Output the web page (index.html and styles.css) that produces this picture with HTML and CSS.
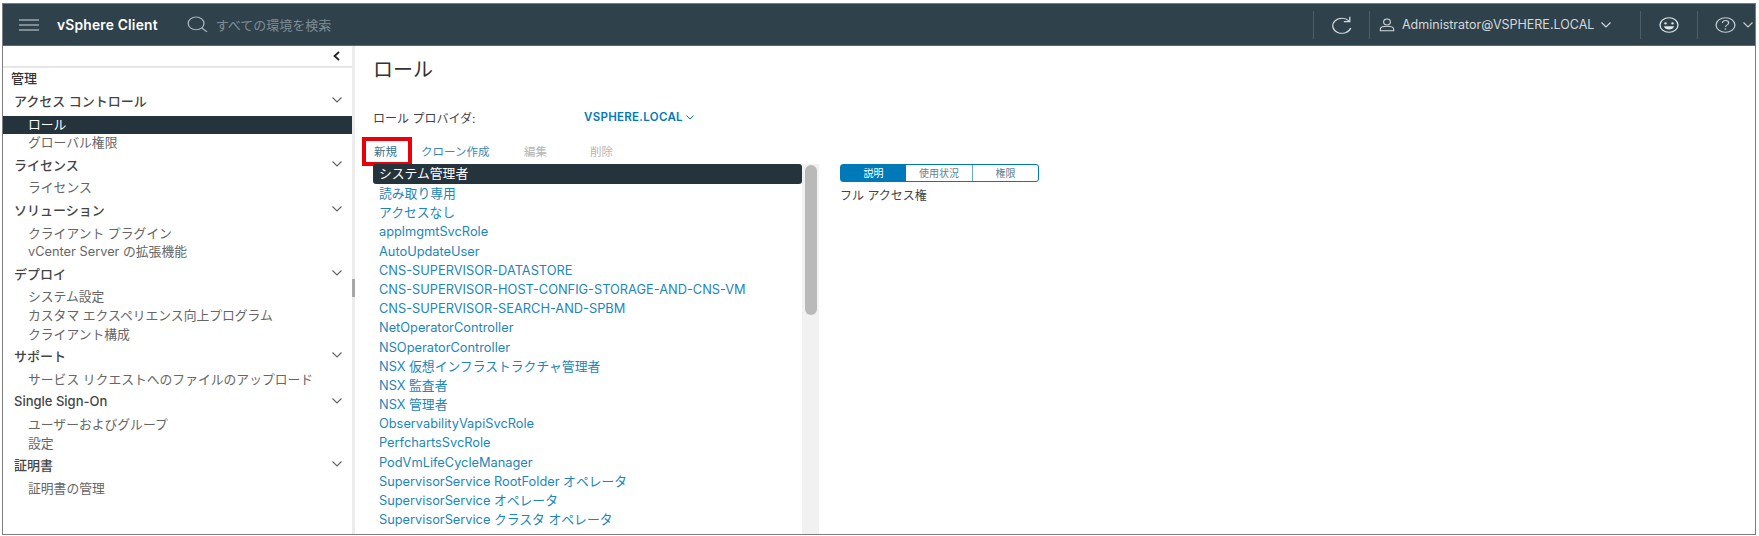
FILE: index.html
```html
<!DOCTYPE html>
<html lang="ja">

<head>
    <meta charset="UTF-8">
    <title>vSphere Client</title>
    <link rel="stylesheet" href="styles.css">
</head>

<body>
    <div class="frame">
        <header class="topbar">
            <svg class="menu-icon" width="20" height="12" viewBox="0 0 20 12">
                <path d="M0 1h20M0 6h20M0 11h20" stroke="#9aa5ab" stroke-width="1.4" fill="none" />
            </svg>
            <span class="brand">vSphere Client</span>
            <svg class="search-icon" width="21" height="17" viewBox="0 0 22 22" preserveAspectRatio="none">
                <circle cx="9.5" cy="9.5" r="8.3" stroke="#a9b3b8" stroke-width="1.4" fill="none" />
                <path d="M15.5 15.5l5.5 5" stroke="#a9b3b8" stroke-width="1.4" fill="none" />
            </svg>
            <span class="search-text">すべての環境を検索</span>
            <div class="top-actions">
                <div class="top-item refresh">
                    <svg width="22" height="18" viewBox="0 0 24 24" preserveAspectRatio="none">
                        <path d="M19.5 6.5A10 10 0 1 0 21.5 16" stroke="#d3d9dc" stroke-width="1.4" fill="none" />
                        <path d="M20.5 1v6.5H14" stroke="#d3d9dc" stroke-width="1.4" fill="none" />
                    </svg>
                </div>
                <div class="top-item user">
                    <svg width="16" height="14" viewBox="0 0 18 18" preserveAspectRatio="none">
                        <circle cx="9" cy="5" r="3.8" stroke="#d3d9dc" stroke-width="1.2" fill="none" />
                        <path d="M1.5 16.5V14c0-2 3-3.5 7.5-3.5s7.5 1.5 7.5 3.5v2.5z" stroke="#d3d9dc" stroke-width="1.2" fill="none" />
                    </svg>
                    <span class="user-name">Administrator@VSPHERE.LOCAL</span>
                    <svg width="10" height="6" viewBox="0 0 10 6">
                        <path d="M.5.5L5 5 9.5.5" stroke="#d3d9dc" stroke-width="1.2" fill="none" />
                    </svg>
                </div>
                <div class="top-item feedback">
                    <svg width="20" height="16" viewBox="0 0 20 20" preserveAspectRatio="none">
                        <circle cx="10" cy="10" r="9" stroke="#e2e6e8" stroke-width="1.3" fill="none" />
                        <circle cx="6.5" cy="8" r="1.3" fill="#e2e6e8" />
                        <circle cx="13.5" cy="8" r="1.3" fill="#e2e6e8" />
                        <path d="M5 11.5h10c-.5 3-2.5 4-5 4s-4.5-1-5-4z" fill="#e2e6e8" />
                    </svg>
                </div>
                <div class="top-item help">
                    <svg width="21" height="16" viewBox="0 0 20 20" preserveAspectRatio="none">
                        <circle cx="10" cy="10" r="9" stroke="#c4ccd0" stroke-width="1.2" fill="none" />
                        <path d="M7 7.5c0-4 6-4 6 0 0 2.5-3 2.5-3 5" stroke="#c4ccd0" stroke-width="1.2" fill="none" />
                        <circle cx="10" cy="15" r=".9" fill="#c4ccd0" />
                    </svg>
                    <svg width="10" height="6" viewBox="0 0 10 6">
                        <path d="M.5.5L5 5 9.5.5" stroke="#c4ccd0" stroke-width="1.2" fill="none" />
                    </svg>
                </div>
            </div>
        </header>

        <div class="content">
            <aside class="sidebar">
                <div class="collapse-bar">
                    <svg width="7" height="10" viewBox="0 0 7 10">
                        <path d="M6 1L1.5 5 6 9" stroke="#222" stroke-width="1.8" fill="none" />
                    </svg>
                </div>
                <div class="side-title">管理</div>

                <div class="group-head">アクセス コントロール<svg class="chev" width="10" height="6" viewBox="0 0 10 6"><path d="M.5.5L5 5 9.5.5" /></svg></div>
                <div class="side-item active">ロール</div>
                <div class="side-item">グローバル権限</div>

                <div class="group-head">ライセンス<svg class="chev" width="10" height="6" viewBox="0 0 10 6"><path d="M.5.5L5 5 9.5.5" /></svg></div>
                <div class="side-item">ライセンス</div>

                <div class="group-head">ソリューション<svg class="chev" width="10" height="6" viewBox="0 0 10 6"><path d="M.5.5L5 5 9.5.5" /></svg></div>
                <div class="side-item">クライアント プラグイン</div>
                <div class="side-item">vCenter Server の拡張機能</div>

                <div class="group-head">デプロイ<svg class="chev" width="10" height="6" viewBox="0 0 10 6"><path d="M.5.5L5 5 9.5.5" /></svg></div>
                <div class="side-item">システム設定</div>
                <div class="side-item">カスタマ エクスペリエンス向上プログラム</div>
                <div class="side-item">クライアント構成</div>

                <div class="group-head">サポート<svg class="chev" width="10" height="6" viewBox="0 0 10 6"><path d="M.5.5L5 5 9.5.5" /></svg></div>
                <div class="side-item">サービス リクエストへのファイルのアップロード</div>

                <div class="group-head">Single Sign-On<svg class="chev" width="10" height="6" viewBox="0 0 10 6"><path d="M.5.5L5 5 9.5.5" /></svg></div>
                <div class="side-item">ユーザーおよびグループ</div>
                <div class="side-item">設定</div>

                <div class="group-head">証明書<svg class="chev" width="10" height="6" viewBox="0 0 10 6"><path d="M.5.5L5 5 9.5.5" /></svg></div>
                <div class="side-item">証明書の管理</div>
            </aside>

            <div class="splitter">
                <div class="splitter-thumb"></div>
            </div>

            <main class="main">
                <h1>ロール</h1>
                <div class="provider">
                    <span class="provider-label">ロール プロバイダ:</span>
                    <span class="provider-value">VSPHERE.LOCAL</span>
                    <svg width="8" height="5" viewBox="0 0 8 5">
                        <path d="M.5.5L4 4 7.5.5" stroke="#0079b8" stroke-width="1" fill="none" />
                    </svg>
                </div>
                <div class="toolbar">
                    <span class="tool tool-new">新規</span>
                    <span class="tool tool-clone">クローン作成</span>
                    <span class="tool tool-edit off">編集</span>
                    <span class="tool off">削除</span>
                </div>
                <div class="panes">
                    <div class="role-pane">
                        <ul class="roles">
                            <li class="selected">システム管理者</li>
                            <li>読み取り専用</li>
                            <li>アクセスなし</li>
                            <li>applmgmtSvcRole</li>
                            <li>AutoUpdateUser</li>
                            <li>CNS-SUPERVISOR-DATASTORE</li>
                            <li>CNS-SUPERVISOR-HOST-CONFIG-STORAGE-AND-CNS-VM</li>
                            <li>CNS-SUPERVISOR-SEARCH-AND-SPBM</li>
                            <li>NetOperatorController</li>
                            <li>NSOperatorController</li>
                            <li>NSX 仮想インフラストラクチャ管理者</li>
                            <li>NSX 監査者</li>
                            <li>NSX 管理者</li>
                            <li>ObservabilityVapiSvcRole</li>
                            <li>PerfchartsSvcRole</li>
                            <li>PodVmLifeCycleManager</li>
                            <li>SupervisorService RootFolder オペレータ</li>
                            <li>SupervisorService オペレータ</li>
                            <li>SupervisorService クラスタ オペレータ</li>
                        </ul>
                        <div class="role-scroll">
                            <div class="role-thumb"></div>
                        </div>
                    </div>
                    <div class="detail">
                        <div class="tabs">
                            <span class="tab on">説明</span>
                            <span class="tab mid">使用状況</span>
                            <span class="tab last">権限</span>
                        </div>
                        <p class="detail-text">フル アクセス権</p>
                    </div>
                </div>
            </main>
        </div>
    </div>
</body>

</html>
```

FILE: styles.css
```css
* {
    margin: 0;
    padding: 0;
    box-sizing: border-box;
}

body {
    height: 536px;
    padding: 3px 3px 1px 2px;
    overflow: hidden;
    background: #fff;
    font-family: Inter, "Noto Sans CJK JP", sans-serif;
    font-size: 12px;
    color: #565656;
}

.frame {
    height: 100%;
    display: flex;
    flex-direction: column;
    border: 1px solid #7d7d7d;
}

/* top bar */
.topbar {
    height: 42px;
    flex: none;
    display: flex;
    align-items: center;
    background: #2f414b;
    border-bottom: 1px solid #5c6a72;
    color: #fff;
}

.menu-icon {
    margin-left: 16px;
}

.brand {
    margin-left: 18px;
    font-size: 13.8px;
    font-weight: 600;
    letter-spacing: 0.2px;
}

.search-icon {
    margin-left: 29px;
}

.search-text {
    margin-left: 8px;
    color: #7f8d94;
    font-size: 13px;
}

.top-actions {
    margin-left: auto;
    display: flex;
    align-items: center;
}

.top-item {
    height: 28px;
    display: flex;
    align-items: center;
    justify-content: center;
    border-left: 1px solid #4d5e67;
}

.refresh {
    width: 56px;
}

.user {
    width: 271px;
    gap: 7px;
    justify-content: flex-start;
    padding-left: 9px;
    color: #d3d9dc;
    font-size: 12.5px;
}

.feedback {
    width: 57px;
}

.help {
    width: 58px;
    gap: 7px;
    justify-content: flex-start;
    padding-left: 17px;
}

/* sidebar */
.content {
    flex: 1;
    display: flex;
    min-height: 0;
}

.sidebar {
    width: 349px;
    flex: none;
}

.collapse-bar {
    height: 22px;
    display: flex;
    align-items: center;
    justify-content: flex-end;
    padding-right: 12px;
    border-bottom: 2px solid #e6e6e6;
}

.side-title {
    height: 21px;
    line-height: 21px;
    padding-left: 8px;
    font-size: 13px;
    font-weight: 500;
    color: #333;
}

.group-head {
    height: 18.6px;
    margin: 2px 0 6px;
    display: flex;
    align-items: center;
    justify-content: space-between;
    padding: 0 10px 0 11px;
    font-size: 13px;
    font-weight: 500;
    color: #444;
}

.chev {
    stroke: #666;
    stroke-width: 1.2;
    fill: none;
}

.side-item {
    height: 18.6px;
    line-height: 18.6px;
    padding-left: 25px;
    font-size: 12.8px;
    color: #666;
}

.side-item.active {
    background: #25333d;
    color: #fff;
}

.splitter {
    width: 3px;
    flex: none;
    background: #ececec;
    padding-top: 233px;
}

.splitter-thumb {
    height: 18px;
    background: #a8a8a8;
}

/* main area */
.main {
    flex: 1;
    min-width: 0;
    padding-left: 7px;
    display: flex;
    flex-direction: column;
}

h1 {
    height: 47px;
    padding: 12px 0 0 11px;
    font-size: 20px;
    font-weight: 400;
    line-height: 24px;
    color: #333;
}

.provider {
    height: 48px;
    display: flex;
    align-items: center;
    padding-left: 11px;
    color: #444;
    font-size: 12px;
}

.provider-label {
    width: 211px;
}

.provider-value {
    margin-right: 3px;
    color: #0079b8;
    font-size: 11.5px;
    font-weight: 600;
    letter-spacing: 0.3px;
}

.toolbar {
    height: 25px;
    display: flex;
    align-items: center;
    margin-top: -2px;
    font-size: 11.5px;
    color: #0079b8;
}

.tool {
    height: 29px;
    line-height: 22px;
    border: 4px solid transparent;
}

.tool-new {
    width: 50px;
    padding-left: 8px;
    border-color: #e8000b;
    color: #3a6f8f;
}

.tool-clone {
    margin-left: 5px;
    width: 103px;
    color: #3a88b5;
}

.tool-edit {
    width: 66px;
}

.off {
    color: #b4b4b4;
}

.panes {
    flex: 1;
    min-height: 0;
    display: flex;
    padding-left: 11px;
}

.role-pane {
    width: 446px;
    flex: none;
    display: flex;
}

.roles {
    flex: 1;
    list-style: none;
    font-size: 12.8px;
    color: #1b86bb;
}

.roles li {
    height: 19.2px;
    line-height: 19.2px;
    padding-left: 6px;
    white-space: nowrap;
}

.roles .selected {
    height: 20px;
    background: #25333d;
    border-radius: 3px;
    color: #fff;
}

.role-scroll {
    width: 17px;
    flex: none;
    background: #f1f1f1;
    padding: 1px 2px 0 3px;
}

.role-thumb {
    height: 150px;
    background: #b9b9b9;
    border-radius: 6px;
}

.detail {
    margin-left: 21px;
}

.tabs {
    width: 199px;
    height: 18px;
    display: flex;
    border: 1px solid #0079b8;
    border-radius: 3px;
    font-size: 10px;
    color: #5f7f92;
}

.tab {
    flex: 1;
    text-align: center;
    line-height: 16px;
}

.tab.on {
    flex: none;
    width: 65px;
    background: #0079b8;
    color: #fff;
}

.tab.mid {
    flex: none;
    width: 67px;
    border-right: 1px solid #6aa8cb;
}

.detail-text {
    margin-top: 5px;
    line-height: 18px;
    font-size: 12px;
    color: #444;
}
```
